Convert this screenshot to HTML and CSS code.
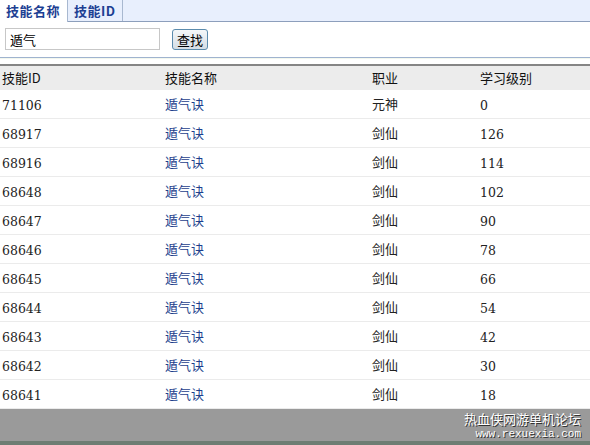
FILE: index.html
```html
<!DOCTYPE html>
<html lang="zh-CN">
  <head>
    <meta charset="UTF-8" />
    <title>技能查询</title>
    <link rel="stylesheet" href="styles.css">
  </head>
  <body>
    <!-- 标签 -->
    <div class="tabs">
      <a class="tab active">技能名称</a>
      <a class="tab">技能ID</a>
    </div>

    <!-- 搜索 -->
    <form class="search">
      <input type="text" value="遁气" />
      <button type="button">查找</button>
    </form>
    <div class="split"></div>

    <!-- 结果 -->
    <table class="result">
      <thead>
        <tr>
          <th class="c-id">技能ID</th>
          <th class="c-name">技能名称</th>
          <th class="c-job">职业</th>
          <th>学习级别</th>
        </tr>
      </thead>
      <tbody>
        <tr><td class="num">71106</td><td><a>遁气诀</a></td><td>元神</td><td class="num">0</td></tr>
        <tr><td class="num">68917</td><td><a>遁气诀</a></td><td>剑仙</td><td class="num">126</td></tr>
        <tr><td class="num">68916</td><td><a>遁气诀</a></td><td>剑仙</td><td class="num">114</td></tr>
        <tr><td class="num">68648</td><td><a>遁气诀</a></td><td>剑仙</td><td class="num">102</td></tr>
        <tr><td class="num">68647</td><td><a>遁气诀</a></td><td>剑仙</td><td class="num">90</td></tr>
        <tr><td class="num">68646</td><td><a>遁气诀</a></td><td>剑仙</td><td class="num">78</td></tr>
        <tr><td class="num">68645</td><td><a>遁气诀</a></td><td>剑仙</td><td class="num">66</td></tr>
        <tr><td class="num">68644</td><td><a>遁气诀</a></td><td>剑仙</td><td class="num">54</td></tr>
        <tr><td class="num">68643</td><td><a>遁气诀</a></td><td>剑仙</td><td class="num">42</td></tr>
        <tr><td class="num">68642</td><td><a>遁气诀</a></td><td>剑仙</td><td class="num">30</td></tr>
        <tr><td class="num">68641</td><td><a>遁气诀</a></td><td>剑仙</td><td class="num">18</td></tr>
      </tbody>
    </table>

    <footer class="footer">
      <div class="mark">
        <span class="mark-cn">热血侠网游单机论坛</span>
        <span class="mark-url">www.rexuexia.com</span>
      </div>
    </footer>
  </body>
</html>
```

FILE: styles.css
```css
body {
  margin: 0;
  padding: 0;
  font-family: "Noto Sans CJK SC", sans-serif;
  font-size: 13px;
  color: #222;
  background: #fff;
  height: 445px;
  overflow: hidden;
}
.tabs {
  display: flex;
  height: 21px;
  background-color: #e8effd;
  border-bottom: 1px solid #8d9fbc;
}
.tab {
  padding: 0 6px;
  line-height: 21px;
  font-size: 13px;
  font-weight: bold;
  letter-spacing: 0.5px;
  color: #1d3f93;
  border-right: 1px solid #a8b8d0;
}
.tab.active {
  background-color: #fff;
  width: 55px;
  height: 22px;
}
.search {
  display: flex;
  align-items: center;
  height: 34px;
  margin: 0;
  padding: 0 0 0 5px;
}
.search input {
  width: 155px;
  height: 22px;
  box-sizing: border-box;
  border: 1px solid #c7c7c7;
  padding: 0 4px;
  font-family: "Noto Sans CJK SC", sans-serif;
  font-size: 13px;
  color: #000;
}
.search button {
  margin-left: 12px;
  height: 21px;
  padding: 0 4px;
  font-family: "Noto Sans CJK SC", sans-serif;
  font-size: 13px;
  line-height: 17px;
  color: #000;
  background: linear-gradient(#f4f7f9, #d4dde5);
  border: 1px solid #5b8bad;
  border-radius: 3px;
}
.split {
  height: 1px;
  margin-top: 1px;
  background-color: #9fb3cf;
  border-bottom: 1px solid #f2f7ee;
}
.result {
  width: 100%;
  margin-top: 5px;
  border-collapse: collapse;
  border-top: 2px solid #858585;
}
.result th {
  padding: 0 2px;
  line-height: 24px;
  text-align: left;
  font-weight: normal;
  color: #111;
  background-color: #ececec;
}
.c-id { width: 159px; }
.c-name { width: 203px; }
.c-job { width: 104px; }
.result td {
  padding: 0 2px;
  line-height: 28px;
  border-bottom: 1px solid #ebebeb;
  color: #222;
}
.result td.num {
  font-family: "DejaVu Serif", serif;
  font-size: 12.5px;
  padding-top: 3px;
  line-height: 25px;
}
.result td a {
  color: #1d3f8d;
}
.footer {
  display: flex;
  justify-content: flex-end;
  height: 32px;
  background-color: #9a9a9a;
  border-bottom: 4px solid #6e7d73;
}
.mark {
  display: flex;
  flex-direction: column;
  align-items: flex-end;
  padding: 0 9px 0 0;
  color: #fff;
  text-shadow: 1px 1px 0 #333;
}
.mark-cn {
  font-size: 13px;
  line-height: 19px;
}
.mark-url {
  font-family: "Liberation Mono", monospace;
  font-size: 11px;
  line-height: 13px;
}
```
